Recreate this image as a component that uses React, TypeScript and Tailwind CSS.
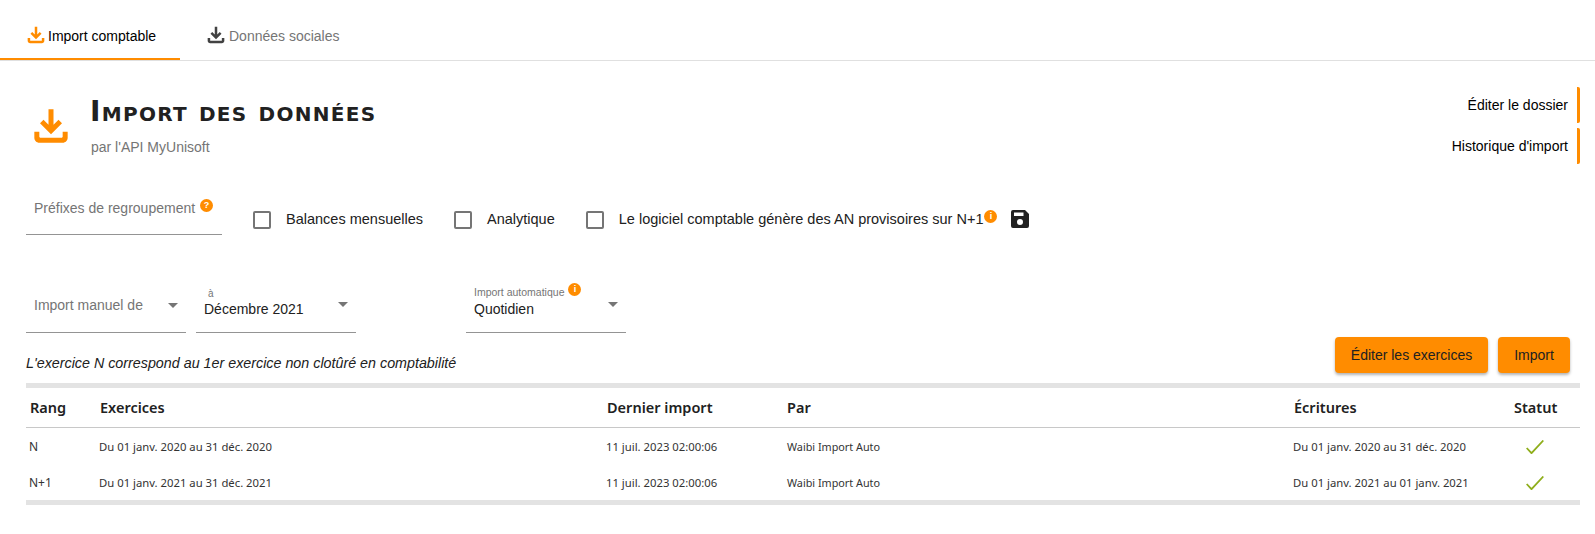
const ImportIcon = ({ className }: { className: string }) => (
  <svg viewBox="0 0 24 24" fill="currentColor" className={className}>
    <path d="M10.5 2h3v9.3l3-3 2.1 2.1L12 17l-6.600-6.600 2.100-2.100 3 3z" />
    <path d="M2 15.500h3v3c0 .3.2.5.5.5h13c.3 0 .5-.2.5-.5v-3h3V19c0 1.700-1.300 3-3 3H5c-1.700 0-3-1.300-3-3z" />
  </svg>
);

const Badge = ({ text, className }: { text: string; className?: string }) => (
  <span
    className={`flex h-[13px] w-[13px] shrink-0 items-center justify-center rounded-full bg-[#ff8c00] text-[9px] leading-none font-bold text-white ${className ?? ''}`}
  >
    {text}
  </span>
);

const Caret = () => (
  <svg viewBox="0 0 10 5" className="h-[5px] w-[10px] shrink-0" fill="#757575">
    <path d="M0 0h10L5 5z" />
  </svg>
);

const Check = ({ label }: { label: string }) => (
  <label className="flex items-center">
    <span className="h-[18px] w-[18px] rounded-[2px] border-2 border-[#757575]" />
    <span className="ml-[15px] text-[14.500px] text-[#212121]">{label}</span>
  </label>
);

const rows = [
  {
    rang: 'N',
    ex: 'Du 01 janv. 2020 au 31 déc. 2020',
    ec: 'Du 01 janv. 2020 au 31 déc. 2020',
  },
  {
    rang: 'N+1',
    ex: 'Du 01 janv. 2021 au 31 déc. 2021',
    ec: 'Du 01 janv. 2021 au 01 janv. 2021',
  },
];

const gridCols = 'grid grid-cols-[74px_507px_180px_507px_220px_66px]';

export default function App() {
  return (
    <div className="min-h-[534px] bg-white font-['Liberation_Sans',Arial,sans-serif] text-[#212121]">
      {/* Tabs */}
      <div className="flex h-[61px] border-b border-[#e0e0e0]">
        <div className="flex h-[60px] w-[180px] items-start gap-[2px] border-b-2 border-[#ff8c00] pt-[27px] pl-[26px] text-[14px] text-black">
          <ImportIcon className="-mt-[2px] h-[20px] w-[20px] text-[#ff8c00]" />
          <span className="leading-[18px]">Import comptable</span>
        </div>
        <div className="flex w-[185px] items-start gap-[3px] pt-[27px] pl-[26px] text-[14px] text-[#757575]">
          <ImportIcon className="-mt-[2px] h-[20px] w-[20px] text-[#424242]" />
          <span className="leading-[18px]">Données sociales</span>
        </div>
      </div>

      <div className="pr-[15px] pl-[26px]">
        {/* Title */}
        <div className="flex items-start justify-between">
          <div className="flex items-start">
            <ImportIcon className="mt-[45px] ml-[5px] h-[40px] w-[40px] text-[#ff8c00]" />
            <div className="ml-[19px]">
              <h1 className="mt-[37px] font-['DejaVu_Sans',sans-serif] text-[28px] leading-[28px] font-bold tracking-[1.300px] text-[#212121] [font-variant:small-caps]">
                Import des données
              </h1>
              <p className="mt-[13px] ml-[1px] text-[14px] leading-[16px] text-[#757575]">par l'API MyUnisoft</p>
            </div>
          </div>
          <div className="mt-[26px] flex flex-col items-end gap-[5px] text-[14px] text-black">
            <div className="flex h-[36px] items-center rounded-r-[2px] border-r-[3px] border-[#ff8c00] pr-[9px]">Éditer le dossier</div>
            <div className="flex h-[36px] items-center rounded-r-[2px] border-r-[3px] border-[#ff8c00] pr-[9px]">Historique d'import</div>
          </div>
        </div>

        {/* Options */}
        <div className="mt-[18px] flex items-start">
          <div className="flex h-[53px] w-[196px] items-start gap-[5px] border-b border-[#949494] pt-[18px] pl-[8px] text-[14px] leading-[16px] text-[#757575]">
            <span>Préfixes de regroupement</span>
            <Badge text="?" className="-mt-[1px]" />
          </div>
          <div className="mt-[27px] ml-[31px] flex items-center gap-[31px]">
            <Check label="Balances mensuelles" />
            <Check label="Analytique" />
            <div className="flex items-center">
              <Check label="Le logiciel comptable génère des AN provisoires sur N+1" />
              <Badge text="i" className="mb-[7px] ml-[1px]" />
              <svg viewBox="0 0 18 18" className="mb-[2px] ml-[14px] h-[18px] w-[18px]" fill="#212121">
                <path d="M2 0h12l4 4v12a2 2 0 0 1-2 2H2a2 2 0 0 1-2-2V2a2 2 0 0 1 2-2zm1 2.500V6h9.500V2.500zM9 9a3 3 0 1 0 0 6 3 3 0 0 0 0-6z" fillRule="evenodd" />
              </svg>
            </div>
          </div>
        </div>

        {/* Selects */}
        <div className="mt-[41px] flex items-start">
          <div className="flex h-[57px] w-[160px] items-start justify-between border-b border-[#949494] pt-[21px] pr-[8px] pl-[8px]">
            <span className="text-[14px] leading-[16px] text-[#757575]">Import manuel de</span>
            <span className="mt-[6px]"><Caret /></span>
          </div>
          <div className="ml-[10px] h-[57px] w-[160px] border-b border-[#949494] pr-[8px] pl-[8px]">
            <div className="mt-[13px] pl-[4px] text-[10px] leading-[10px] text-[#757575]">à</div>
            <div className="mt-[2px] flex items-start justify-between">
              <span className="text-[14px] leading-[16px] text-[#212121]">Décembre 2021</span>
              <span className="mt-[1px]"><Caret /></span>
            </div>
          </div>
          <div className="ml-[110px] h-[57px] w-[160px] border-b border-[#949494] pr-[8px] pl-[8px]">
            <div className="mt-[10px] flex items-center gap-[4px] text-[10.500px] leading-[12px] text-[#757575]">
              <span>Import automatique</span>
              <Badge text="i" className="-mt-[6px] h-[12px] w-[12px]" />
            </div>
            <div className="mt-[3px] flex items-start justify-between">
              <span className="text-[14px] leading-[16px] text-[#212121]">Quotidien</span>
              <span className="mt-[1px]"><Caret /></span>
            </div>
          </div>
        </div>

        {/* Note + actions */}
        <div className="mt-[4px] flex items-start justify-between">
          <p className="mt-[16px] text-[14.300px] leading-[20px] text-[#212121] italic">
            L'exercice N correspond au 1er exercice non clotûré en comptabilité
          </p>
          <div className="mr-[10px] flex gap-[10px]">
            <button className="h-[36px] w-[153px] rounded-[4px] bg-[#ff8c00] text-[14px] text-[#212121] shadow-[0_2px_3px_rgba(0,0,0,0.3)]">
              Éditer les exercices
            </button>
            <button className="h-[36px] w-[72px] rounded-[4px] bg-[#ff8c00] text-[14px] text-[#212121] shadow-[0_2px_3px_rgba(0,0,0,0.3)]">
              Import
            </button>
          </div>
        </div>

        {/* Table */}
        <div className="mt-[10px] w-[1554px] border-y-[5px] border-[#e3e3e3] font-['Noto_Sans',sans-serif]">
          <div className={`${gridCols} h-[40px] items-center border-b border-[#c8c8c8] text-[14.500px] font-semibold text-[#212121]`}>
            <span className="pl-[4px]">Rang</span>
            <span>Exercices</span>
            <span>Dernier import</span>
            <span>Par</span>
            <span>Écritures</span>
            <span>Statut</span>
          </div>
          {rows.map((row) => (
            <div key={row.rang} className={`${gridCols} h-[36px] items-center pt-[2px] text-[11.300px] text-[#333333]`}>
              <span className="pl-[3px] text-[12px]">{row.rang}</span>
              <span className="-ml-[1px]">{row.ex}</span>
              <span className="-ml-[1px]">11 juil. 2023 02:00:06</span>
              <span className="text-[10.800px]">Waibi Import Auto</span>
              <span className="-ml-[1px]">{row.ec}</span>
              <svg viewBox="0 0 18 14" className="ml-[12px] h-[14px] w-[18px]" fill="none" stroke="#8fae1b" strokeWidth="1.800">
                <path d="M0.700 8l4.800 5.200L17.300 0.500" />
              </svg>
            </div>
          ))}
        </div>
      </div>
    </div>
  );
}
